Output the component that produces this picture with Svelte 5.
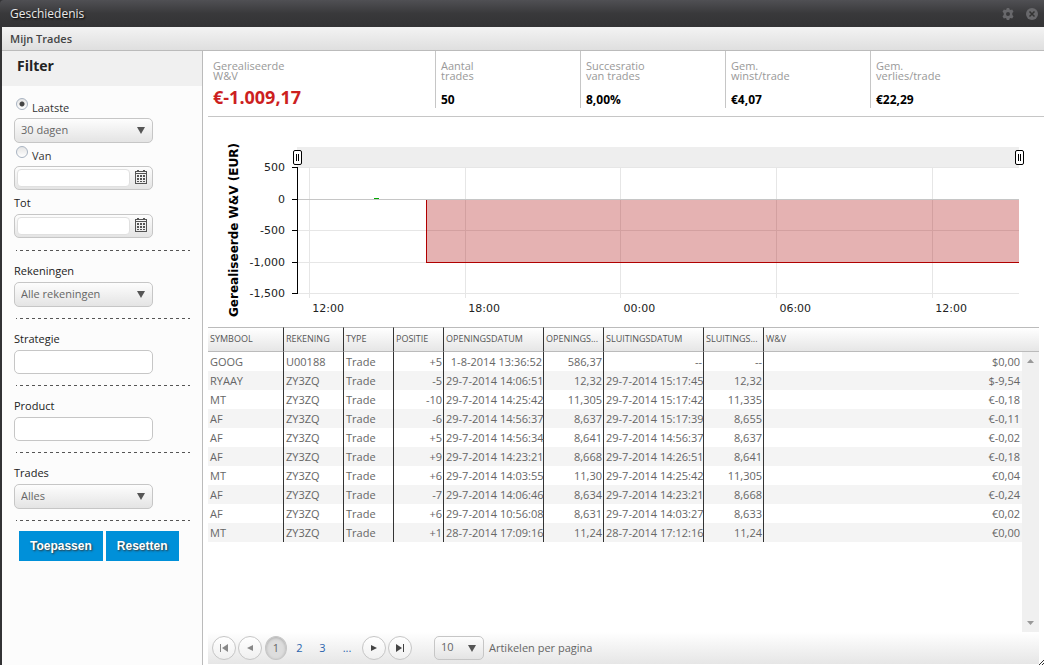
<script lang="ts">
  interface Trade {
    symbol: string;
    account: string;
    type: string;
    position: string;
    opened: string;
    openPrice: string;
    closed: string;
    closePrice: string;
    result: string;
  }

  const row = (
    symbol: string,
    account: string,
    position: string,
    opened: string,
    openPrice: string,
    closed: string,
    closePrice: string,
    result: string,
  ): Trade => ({ symbol, account, type: "Trade", position, opened, openPrice, closed, closePrice, result });

  const trades: Trade[] = [
    row("GOOG", "U00188", "+5", "1-8-2014 13:36:52", "586,37", "--", "--", "$0,00"),
    row("RYAAY", "ZY3ZQ", "-5", "29-7-2014 14:06:51", "12,32", "29-7-2014 15:17:45", "12,32", "$-9,54"),
    row("MT", "ZY3ZQ", "-10", "29-7-2014 14:25:42", "11,305", "29-7-2014 15:17:42", "11,335", "€-0,18"),
    row("AF", "ZY3ZQ", "-6", "29-7-2014 14:56:37", "8,637", "29-7-2014 15:17:39", "8,655", "€-0,11"),
    row("AF", "ZY3ZQ", "+5", "29-7-2014 14:56:34", "8,641", "29-7-2014 14:56:37", "8,637", "€-0,02"),
    row("AF", "ZY3ZQ", "+9", "29-7-2014 14:23:21", "8,668", "29-7-2014 14:26:51", "8,641", "€-0,18"),
    row("MT", "ZY3ZQ", "+6", "29-7-2014 14:03:55", "11,30", "29-7-2014 14:25:42", "11,305", "€0,04"),
    row("AF", "ZY3ZQ", "-7", "29-7-2014 14:06:46", "8,634", "29-7-2014 14:23:21", "8,668", "€-0,24"),
    row("AF", "ZY3ZQ", "+6", "29-7-2014 10:56:08", "8,631", "29-7-2014 14:03:27", "8,633", "€0,02"),
    row("MT", "ZY3ZQ", "+1", "28-7-2014 17:09:16", "11,24", "28-7-2014 17:12:16", "11,24", "€0,00"),
  ];

  const columns = [
    { title: "SYMBOOL", width: "76px" },
    { title: "REKENING", width: "60px" },
    { title: "TYPE", width: "50px" },
    { title: "POSITIE", width: "50px" },
    { title: "OPENINGSDATUM", width: "100px" },
    { title: "OPENINGS...", width: "60px" },
    { title: "SLUITINGSDATUM", width: "100px" },
    { title: "SLUITINGS...", width: "60px" },
    { title: "W&V", width: "auto" },
  ];

  const stats = [
    { lines: ["Gerealiseerde", "W&V"], value: "€-1.009,17", main: true },
    { lines: ["Aantal", "trades"], value: "50" },
    { lines: ["Succesratio", "van trades"], value: "8,00%" },
    { lines: ["Gem.", "winst/trade"], value: "€4,07" },
    { lines: ["Gem.", "verlies/trade"], value: "€22,29" },
  ];

  // y in px from the top of the plot, x as a share of its width
  const yTicks = [
    { label: "500", y: 20 },
    { label: "0", y: 52 },
    { label: "-500", y: 83 },
    { label: "-1,000", y: 115 },
    { label: "-1,500", y: 146 },
  ];
  const xTicks = [
    { label: "12:00", x: "1.7%" },
    { label: "18:00", x: "23.3%" },
    { label: "00:00", x: "44.8%" },
    { label: "06:00", x: "66.4%" },
    { label: "12:00", x: "88%" },
  ];

  let mode = $state("last");
  let period = $state("30 dagen");
  let account = $state("Alle rekeningen");
  let kind = $state("Alles");
  let from = $state("");
  let to = $state("");
  let strategy = $state("");
  let product = $state("");
  let pageSize = $state("10");

  function reset() {
    mode = "last";
    from = to = strategy = product = "";
  }
</script>

{#snippet arrow()}
  <svg class="arrow" width="8" height="7" viewBox="0 0 8 7" aria-hidden="true">
    <path d="M0 0H8L4 7Z" fill="#555" />
  </svg>
{/snippet}

{#snippet calendar()}
  <svg width="12" height="14" viewBox="0 0 12 14" aria-hidden="true" shape-rendering="crispEdges">
    <path d="M0 1H2V0H4V1H8V0H10V1H12V14H0ZM1 4V13H11V4ZM1 2V3H11V2Z" fill="#555" fill-rule="evenodd" />
    <path
      d="M2 5h2v2h-2zM5 5h2v2h-2zM8 5h2v2h-2zM2 8h2v2h-2zM5 8h2v2h-2zM8 8h2v2h-2zM2 11h2v1h-2zM5 11h2v1h-2zM8 11h2v1h-2z"
      fill="#555"
    />
  </svg>
{/snippet}

{#snippet handle()}
  <rect x="-3.5" y="3.5" width="8" height="14" rx="1.5" fill="#fff" stroke="#000" />
  <path d="M-0.5 7V14M1.5 7V14" stroke="#000" />
{/snippet}

<div class="window">
  <header class="titlebar">
    <h1>Geschiedenis</h1>
    <div class="tools">
      <button type="button" aria-label="Instellingen">
        <svg width="12" height="12" viewBox="0 0 12 12">
          <path
            d="M4.8 0h2.4l.4 1.6 1 .5L10.200 1.600 11.500 3.700 10.300 4.900v2.200L11.500 8.300 10.200 10.400 8.600 9.900l-1 .5L7.200 12H4.800l-.4-1.600-1-.5-1.600.5L.5 8.300 1.700 7.100V4.900L.5 3.700 1.800 1.600l1.600.5 1-.5ZM6 4a2 2 0 1 0 0 4 2 2 0 0 0 0-4Z"
            fill="#68686b"
            fill-rule="evenodd"
          />
        </svg>
      </button>
      <button type="button" aria-label="Sluiten">
        <svg width="12" height="12" viewBox="0 0 12 12">
          <circle cx="6" cy="6" r="6" fill="#68686b" />
          <path d="M3.500 3.500L8.500 8.500M8.500 3.500L3.500 8.500" stroke="#333" stroke-width="1.500" />
        </svg>
      </button>
    </div>
  </header>

  <div class="frame">
    <h2 class="subbar">Mijn Trades</h2>

    <div class="body">
      <aside class="sidebar">
        <h3>Filter</h3>
        <form onsubmit={(e) => e.preventDefault()}>
          <div class="group group--period">
            <label class="choice">
              <input type="radio" name="mode" value="last" bind:group={mode} />
              <span>Laatste</span>
            </label>
            <div class="combo">
              <select bind:value={period} aria-label="Periode">
                <option>30 dagen</option>
                <option>60 dagen</option>
              </select>
              {@render arrow()}
            </div>
            <label class="choice">
              <input type="radio" name="mode" value="range" bind:group={mode} />
              <span>Van</span>
            </label>
            <div class="date">
              <input type="text" bind:value={from} aria-label="Van" />
              <button type="button" aria-label="Kies begindatum">{@render calendar()}</button>
            </div>
            <label class="caption caption--to" for="to">Tot</label>
            <div class="date">
              <input id="to" type="text" bind:value={to} />
              <button type="button" aria-label="Kies einddatum">{@render calendar()}</button>
            </div>
          </div>

          <div class="divider"></div>
          <div class="group">
            <label class="caption" for="account">Rekeningen</label>
            <div class="combo">
              <select id="account" bind:value={account}>
                <option>Alle rekeningen</option>
              </select>
              {@render arrow()}
            </div>
          </div>

          <div class="divider"></div>
          <div class="group">
            <label class="caption" for="strategy">Strategie</label>
            <input class="text" id="strategy" type="text" bind:value={strategy} />
          </div>

          <div class="divider"></div>
          <div class="group">
            <label class="caption" for="product">Product</label>
            <input class="text" id="product" type="text" bind:value={product} />
          </div>

          <div class="divider"></div>
          <div class="group">
            <label class="caption" for="kind">Trades</label>
            <div class="combo">
              <select id="kind" bind:value={kind}>
                <option>Alles</option>
              </select>
              {@render arrow()}
            </div>
          </div>

          <div class="divider"></div>
          <div class="actions">
            <button type="submit">Toepassen</button>
            <button type="button" onclick={reset}>Resetten</button>
          </div>
        </form>
      </aside>

      <main>
        <section class="stats">
          {#each stats as stat}
            <div class="stat" class:stat--main={stat.main}>
              <p>{stat.lines[0]}<br />{stat.lines[1]}</p>
              <strong>{stat.value}</strong>
            </div>
          {/each}
        </section>

        <section class="chart">
          <div class="axis-title">Gerealiseerde W&amp;V (EUR)</div>
          <svg class="plot" role="img" aria-label="Gerealiseerde W&V (EUR)">
            <rect width="100%" height="20" fill="#eee" />
            <g shape-rendering="crispEdges">
              {#each xTicks as tick}
                <line x1={tick.x} x2={tick.x} y1="21" y2="151" stroke="#e6e6e6" />
              {/each}
              {#each yTicks as tick}
                <line x1="0" x2="100%" y1={tick.y + 0.5} y2={tick.y + 0.5} stroke={tick.label === "0" ? "#c6c6c6" : "#e6e6e6"} />
                <line x1="-5" x2="0" y1={tick.y + 0.5} y2={tick.y + 0.5} stroke="#000" />
              {/each}
              <line x1="0.5" x2="0.5" y1="20" y2="147" stroke="#000" />
              <rect x="17.9%" y="53" width="82.1%" height="63" fill="#a00" fill-opacity="0.3" />
              <line x1="17.9%" x2="17.9%" y1="53" y2="116" stroke="#b00000" />
              <line x1="17.9%" x2="100%" y1="115.5" y2="115.5" stroke="#b00000" />
              <rect x="10.6%" y="51" width="5" height="1" fill="#00a800" />
            </g>
            {#each yTicks as tick}
              <text x="-12" y={tick.y + 4} text-anchor="end">{tick.label}</text>
            {/each}
            {#each xTicks as tick}
              <text x={tick.x} y="165" dx="3">{tick.label}</text>
            {/each}
            {@render handle()}
            <svg x="100%" overflow="visible">{@render handle()}</svg>
          </svg>
        </section>

        <section class="grid">
          <table>
            <colgroup>
              {#each columns as column}
                <col style="width: {column.width}" />
              {/each}
            </colgroup>
            <thead>
              <tr>
                {#each columns as column}
                  <th scope="col">{column.title}</th>
                {/each}
              </tr>
            </thead>
            <tbody>
              {#each trades as trade}
                <tr>
                  <td>{trade.symbol}</td>
                  <td>{trade.account}</td>
                  <td>{trade.type}</td>
                  <td class="num">{trade.position}</td>
                  <td class="num">{trade.opened}</td>
                  <td class="num">{trade.openPrice}</td>
                  <td class="num">{trade.closed}</td>
                  <td class="num">{trade.closePrice}</td>
                  <td class="num result">{trade.result}</td>
                </tr>
              {/each}
            </tbody>
          </table>
          <div class="scrollbar" aria-hidden="true">
            <svg width="7" height="4" viewBox="0 0 7 4"><path d="M0 4L3.500 0L7 4Z" fill="#999" /></svg>
            <svg width="7" height="4" viewBox="0 0 7 4"><path d="M0 0L3.500 4L7 0Z" fill="#999" /></svg>
          </div>
        </section>

        <nav class="pager">
          <button class="round dim" type="button" aria-label="Eerste pagina">
            <svg width="8" height="8" viewBox="0 0 8 8"><path d="M0 0H1V8H0ZM8 0V8L2 4Z" /></svg>
          </button>
          <button class="round dim" type="button" aria-label="Vorige pagina">
            <svg width="8" height="8" viewBox="0 0 8 8"><path d="M7 1V7L1 4Z" /></svg>
          </button>
          <span class="current" aria-current="page">1</span>
          <a href="#2">2</a>
          <a href="#3">3</a>
          <a class="more" href="#4">...</a>
          <button class="round" type="button" aria-label="Volgende pagina">
            <svg width="8" height="8" viewBox="0 0 8 8"><path d="M1 1V7L7 4Z" /></svg>
          </button>
          <button class="round" type="button" aria-label="Laatste pagina">
            <svg width="8" height="8" viewBox="0 0 8 8"><path d="M0 0V8L6 4ZM7 0H8V8H7Z" /></svg>
          </button>
          <div class="combo combo--size">
            <select id="size" bind:value={pageSize}>
              <option>10</option>
              <option>20</option>
            </select>
            {@render arrow()}
          </div>
          <label for="size">Artikelen per pagina</label>
        </nav>
      </main>
    </div>
  </div>
  <svg class="grip" width="5" height="5" viewBox="0 0 5 5" aria-hidden="true">
    <path d="M0 5L5 0M3 5L5 3" stroke="#333" fill="none" />
  </svg>
</div>

<style>
  :global(body) {
    background: #333335;
  }

  .window,
  .window * {
    box-sizing: border-box;
  }

  .window {
    position: relative;
    display: flex;
    flex-direction: column;
    min-height: 100vh;
    font: 11px/16px "Open Sans", sans-serif;
    color: #333;
  }

  h1,
  h2,
  h3,
  p {
    margin: 0;
  }

  button,
  input,
  select {
    margin: 0;
    font: inherit;
    color: inherit;
  }

  button {
    padding: 0;
    border: none;
    background: none;
    cursor: pointer;
  }

  button svg {
    display: block;
  }

  /* ── Window chrome ── */
  .titlebar {
    display: flex;
    align-items: center;
    justify-content: space-between;
    height: 27px;
    padding: 0 6px 0 10px;
    border-top-left-radius: 4px;
    background: linear-gradient(#505054, #39393b 50%, #333335);
  }

  .titlebar h1 {
    font-size: 12px;
    font-weight: 400;
    line-height: 24px;
    color: #e8e8e8;
    text-shadow: 1px 1px 2px #000;
  }

  .tools {
    display: flex;
    gap: 12px;
  }

  .frame {
    display: flex;
    flex: 1;
    flex-direction: column;
    margin-left: 2px;
    background: #fff;
  }

  .grip {
    position: absolute;
    right: 0;
    bottom: 0;
  }

  .subbar {
    height: 24px;
    padding: 0 8px;
    border-bottom: 1px solid #bbb;
    background: linear-gradient(#f3f3f3, #dfdfdf);
    font-size: 11px;
    font-weight: 600;
    line-height: 24px;
    color: #444;
  }

  .body {
    display: flex;
    flex: 1;
  }

  /* ── Filter ── */
  .sidebar {
    flex: none;
    width: 201px;
    border-right: 1px solid #bbb;
    background: #fcfcfc;
  }

  .sidebar h3 {
    height: 35px;
    padding-left: 15px;
    background: #f0f0f0;
    font-size: 14px;
    line-height: 30px;
    color: #222;
  }

  .sidebar form {
    padding: 0 12px;
  }

  .group {
    width: 139px;
    padding: 12px 0 11px;
  }

  .group--period {
    padding: 9px 0 12px;
  }

  /* dashes start with a short dot on the left */
  .divider {
    width: 174px;
    height: 1px;
    margin-left: 2px;
    background: repeating-linear-gradient(90deg, #555 0 1px, transparent 1px 4px, #555 4px 6px);
  }

  .caption {
    display: block;
    margin-bottom: 3px;
    color: #222;
  }

  .caption--to {
    margin-top: 5px;
  }

  .choice {
    display: flex;
    gap: 4px;
    height: 23px;
    padding: 3px 0 0 2px;
  }

  .choice span {
    padding-top: 2px;
  }

  .choice input {
    appearance: none;
    width: 12px;
    height: 12px;
    border: 1px solid #a9b4c2;
    border-radius: 50%;
    background: linear-gradient(#e4e4e4, #fff);
  }

  .choice input:checked {
    background: radial-gradient(circle, #444 0 2px, transparent 3px), linear-gradient(#e4e4e4, #fff);
  }

  .combo {
    display: flex;
    align-items: center;
    height: 25px;
    border: 1px solid #c6c6c6;
    border-radius: 5px;
    background: linear-gradient(#fdfdfd, #e4e4e4);
    color: #666;
  }

  .combo select {
    appearance: none;
    flex: 1;
    min-width: 0;
    height: 23px;
    padding: 0 20px 2px 6px;
    margin-right: -15px;
    border: none;
    background: none;
  }

  .arrow {
    flex: none;
    margin-right: 7px;
    pointer-events: none;
  }

  .date {
    display: flex;
    height: 24px;
    padding: 2px 5px 2px 2px;
    border: 1px solid #c6c6c6;
    border-radius: 5px;
    background: linear-gradient(#fdfdfd, #e4e4e4);
  }

  .date input {
    width: 113px;
    padding: 0 4px;
    border: 1px solid #e0e0e0;
    border-radius: 4px;
    background: #fff;
  }

  .date button {
    margin: 1px 0 0 5px;
    height: 14px;
  }

  .text {
    display: block;
    width: 100%;
    height: 24px;
    padding: 0 6px;
    border: 1px solid #c6c6c6;
    border-radius: 5px;
    background: #fff;
  }

  .actions {
    display: flex;
    gap: 3px;
    padding: 10px 5px;
  }

  .actions button {
    height: 30px;
    padding: 0 11px;
    background: #0090d9;
    font: bold 12px "Liberation Sans", Arial, sans-serif;
    color: #fff;
    text-shadow: 1px 1px 2px #333;
  }

  /* ── Totals ── */
  main {
    display: flex;
    flex: 1;
    flex-direction: column;
    min-width: 0;
    padding: 0 0 1px 5px;
  }

  .stats {
    display: grid;
    grid-template-columns: 227px repeat(3, 145px) 1fr;
    height: 66px;
    border-bottom: 1px solid #c6c6c6;
  }

  .stat {
    height: 57px;
    padding: 10px 5px 0;
    border-left: 1px solid #c6c6c6;
  }

  .stat--main {
    border-left-color: transparent;
    padding-left: 4px;
  }

  .stat p {
    line-height: 10px;
    color: #999;
  }

  .stat strong {
    display: block;
    margin-top: 9px;
    font-size: 12px;
    line-height: 20px;
    color: #000;
  }

  .stat--main strong {
    margin-top: 6px;
    font-size: 18px;
    color: #cc1f1f;
  }

  /* ── Chart ── */
  .chart {
    display: flex;
    height: 210px;
    padding: 25px 25px 0 18px;
    font: 11px "DejaVu Sans", Verdana, sans-serif;
  }

  .axis-title {
    flex: none;
    width: 16px;
    height: 176px;
    writing-mode: vertical-rl;
    transform: rotate(180deg);
    font-size: 12px;
    font-weight: bold;
    line-height: 16px;
    text-align: center;
    white-space: nowrap;
    color: #000;
  }

  .plot {
    flex: 1;
    min-width: 0;
    height: 170px;
    margin: 5px 0 0 55px;
    overflow: visible;
    fill: #222;
  }

  /* ── Trades ── */
  .grid {
    position: relative;
    flex: 1;
    margin-right: 5px;
  }

  table {
    width: 100%;
    table-layout: fixed;
    border-collapse: separate;
    border-spacing: 0;
    color: #666;
  }

  th,
  td {
    height: 19px;
    padding: 0 1px 0 2px;
    border-right: 1px solid #333;
    line-height: 18px;
    text-align: left;
    white-space: nowrap;
  }

  th:last-child,
  td:last-child {
    border-right: none;
  }

  th {
    height: 25px;
    padding-bottom: 2px;
    border-top: 1px solid #bbb;
    border-bottom: 1px solid #bbb;
    background: linear-gradient(#fff, #e6e6e6);
    font-size: 9px;
    font-weight: 400;
    color: #555;
  }

  tbody tr:nth-child(even) {
    background: #f4f4f4;
  }

  .num {
    text-align: right;
  }

  td.result {
    padding-right: 19px;
  }

  .scrollbar {
    position: absolute;
    top: 25px;
    right: 0;
    bottom: 0;
    display: flex;
    flex-direction: column;
    align-items: center;
    justify-content: space-between;
    width: 17px;
    padding: 7px 0;
    background: #f0f0f0;
  }

  /* ── Pager ── */
  .pager {
    display: flex;
    align-items: center;
    height: 32px;
    margin-right: 5px;
    padding-left: 4px;
    background: linear-gradient(#fff, #e6e6e6);
    color: #666;
  }

  .round,
  .current {
    display: flex;
    flex: none;
    align-items: center;
    justify-content: center;
    width: 24px;
    height: 24px;
    border: 1px solid #c6c6c6;
    border-radius: 50%;
  }

  .round {
    margin-right: 2px;
    background: linear-gradient(#fff, #f0f0f0);
    fill: #444;
  }

  .dim {
    fill: #888;
  }

  .current {
    width: 22px;
    margin: 0 1px;
    background: #ddd;
    box-shadow: inset 0 1px 3px #aaa;
  }

  .pager a {
    width: 23px;
    color: #2a64ad;
    text-align: center;
    text-decoration: none;
  }

  .pager .more {
    width: 26px;
    margin-right: 2px;
  }

  .combo--size {
    width: 50px;
    height: 24px;
    margin: 0 5px 0 20px;
  }
</style>
